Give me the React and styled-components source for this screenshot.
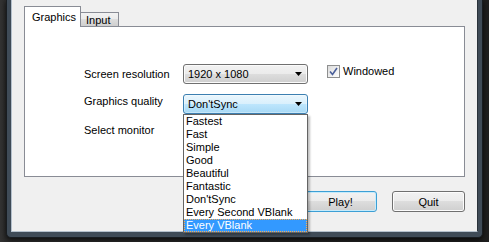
import React from "react";
import styled, { createGlobalStyle, css } from "styled-components";

const Global = createGlobalStyle`
  html, body { margin: 0; padding: 0; background: #252525; }
  body { font-family: "Liberation Sans", Arial, sans-serif; font-size: 11px; color: #000; }
`;

const Desktop = styled.div`
  width: 489px;
  height: 242px;
  overflow: hidden;
  background: linear-gradient(90deg, #333 0px, #2c2c2c 5px, #1e1e1e 100%);
  padding-left: 6px;
  box-sizing: border-box;
`;

const Frame = styled.div`
  width: 477px;
  box-sizing: border-box;
  background: #3f4b57;
  border: 1px solid #181c20;
  border-top: none;
  border-radius: 0 0 5px 5px;
  padding: 0 4px 5px 4px;
  box-shadow: 0 2px 5px rgba(0, 0, 0, 0.7);
`;

const Client = styled.div`
  background: #f0f0f0;
  border: 1px solid #b4c0cc;
  border-top: none;
  border-right-color: #2a323a;
  height: 225px;
  padding: 6px 12px 0 12px;
  box-sizing: content-box;
  display: flex;
  flex-direction: column;
`;

const TabBar = styled.div`
  display: flex;
  align-items: flex-end;
  height: 20px;
`;

const Tab = styled.div`
  box-sizing: border-box;
  border: 1px solid #898c95;
  border-bottom: none;
  position: relative;
  ${(p) =>
    p.$active
      ? css`
          height: 21px;
          margin-bottom: -1px;
          background: #fff;
          z-index: 2;
          padding: 4px 0 0 7px;
          width: 57px;
        `
      : css`
          height: 14px;
          margin-left: -1px;
          background: linear-gradient(#f2f2f2, #ebebeb 50%, #dddddd 50%, #cfcfcf);
          padding: 1px 0 0 5px;
          width: 39px;
          line-height: 13px;
        `}
`;

const Panel = styled.div`
  box-sizing: border-box;
  width: 441px;
  height: 151px;
  background: #fff;
  border: 1px solid #898c95;
  padding: 37px 0 0 59px;
  position: relative;
  z-index: 1;
`;

const Form = styled.div`
  display: grid;
  grid-template-columns: 99px 125px auto;
  grid-template-rows: 20px 20px 20px;
  row-gap: 10px;
  column-gap: 0;
  align-items: start;
`;

const Label = styled.div`
  padding-top: ${(p) => p.$dy}px;
  line-height: 13px;
  white-space: nowrap;
`;

const ComboWrap = styled.div`
  position: relative;
  z-index: ${(p) => (p.$open ? 5 : 1)};
`;

const Combo = styled.div`
  box-sizing: border-box;
  height: 20px;
  border-radius: 3px;
  display: flex;
  align-items: center;
  justify-content: space-between;
  padding: 0 5px 0 4px;
  line-height: 13px;
  ${(p) =>
    p.$focused
      ? css`
          border: 1px solid #3c7fb1;
          background: linear-gradient(#eaf6fd, #d9f0fc 50%, #bee6fd 50%, #a7d9f5);
          box-shadow: inset 0 0 0 1px rgba(255, 255, 255, 0.35);
        `
      : css`
          border: 1px solid #707070;
          background: linear-gradient(#f2f2f2, #ebebeb 50%, #dddddd 50%, #cfcfcf);
          box-shadow: inset 0 0 0 1px #fbfbfb;
        `}
`;

const Arrow = () => (
  <svg width="7" height="4" viewBox="0 0 7 4" style={{ display: "block" }}>
    <polygon points="0,0 7,0 3.5,4" fill="#000" />
  </svg>
);

const DropList = styled.div`
  position: absolute;
  top: 100%;
  left: 0;
  width: 125px;
  box-sizing: border-box;
  background: #fff;
  border: 1px solid #646464;
  box-shadow: 2px 2px 2px rgba(0, 0, 0, 0.25);
`;

const Item = styled.div`
  height: 13px;
  line-height: 13px;
  padding-left: 2px;
  box-sizing: border-box;
  white-space: nowrap;
  ${(p) =>
    p.$selected &&
    css`
      background: #3399ff;
      color: #fff;
      outline: 1px dotted #ffb050;
      outline-offset: -1px;
    `}
`;

const CheckRow = styled.label`
  display: flex;
  align-items: center;
  gap: 3px;
  margin-left: 19px;
  margin-top: 1px;
  line-height: 13px;
`;

const Box = styled.span`
  width: 13px;
  height: 13px;
  box-sizing: border-box;
  border: 1px solid #8e8f8f;
  background: linear-gradient(135deg, #dcdcdc, #fefefe);
  display: flex;
  align-items: center;
  justify-content: center;
`;

const ButtonRow = styled.div`
  display: flex;
  justify-content: flex-end;
  gap: 15px;
  margin-top: 14px;
`;

const Button = styled.div`
  box-sizing: border-box;
  width: 73px;
  height: 21px;
  border-radius: 3px;
  display: flex;
  align-items: center;
  justify-content: center;
  background: linear-gradient(#f2f2f2, #ebebeb 50%, #dddddd 50%, #cfcfcf);
  border: 1px solid ${(p) => (p.$default ? "#3c9fd5" : "#707070")};
  box-shadow: inset 0 0 0 1px ${(p) => (p.$default ? "#c6ebfb" : "#fcfcfc")};
`;

const qualities = [
  "Fastest",
  "Fast",
  "Simple",
  "Good",
  "Beautiful",
  "Fantastic",
  "Don'tSync",
  "Every Second VBlank",
  "Every VBlank",
];

export default function App() {
  return (
    <>
      <Global />
      <Desktop>
        <Frame>
          <Client>
            <TabBar>
              <Tab $active>Graphics</Tab>
              <Tab>Input</Tab>
            </TabBar>
            <Panel>
              <Form>
                <Label $dy={4}>Screen resolution</Label>
                <ComboWrap>
                  <Combo>
                    <span>1920 x 1080</span>
                    <Arrow />
                  </Combo>
                </ComboWrap>
                <CheckRow>
                  <Box>
                    <svg width="9" height="9" viewBox="0 0 9 9">
                      <path d="M1 4.5 L3.5 7.5 L8 1" fill="none" stroke="#4a5f9a" strokeWidth="1.6" />
                    </svg>
                  </Box>
                  Windowed
                </CheckRow>
                <Label $dy={1}>Graphics quality</Label>
                <ComboWrap $open>
                  <Combo $focused>
                    <span>Don'tSync</span>
                    <Arrow />
                  </Combo>
                  <DropList>
                    {qualities.map((q) => (
                      <Item key={q} $selected={q === "Every VBlank"}>
                        {q}
                      </Item>
                    ))}
                  </DropList>
                </ComboWrap>
                <span />
                <Label $dy={0}>Select monitor</Label>
                <ComboWrap>
                  <Combo>
                    <span />
                    <Arrow />
                  </Combo>
                </ComboWrap>
                <span />
              </Form>
            </Panel>
            <ButtonRow>
              <Button $default>Play!</Button>
              <Button>Quit</Button>
            </ButtonRow>
          </Client>
        </Frame>
      </Desktop>
    </>
  );
}
